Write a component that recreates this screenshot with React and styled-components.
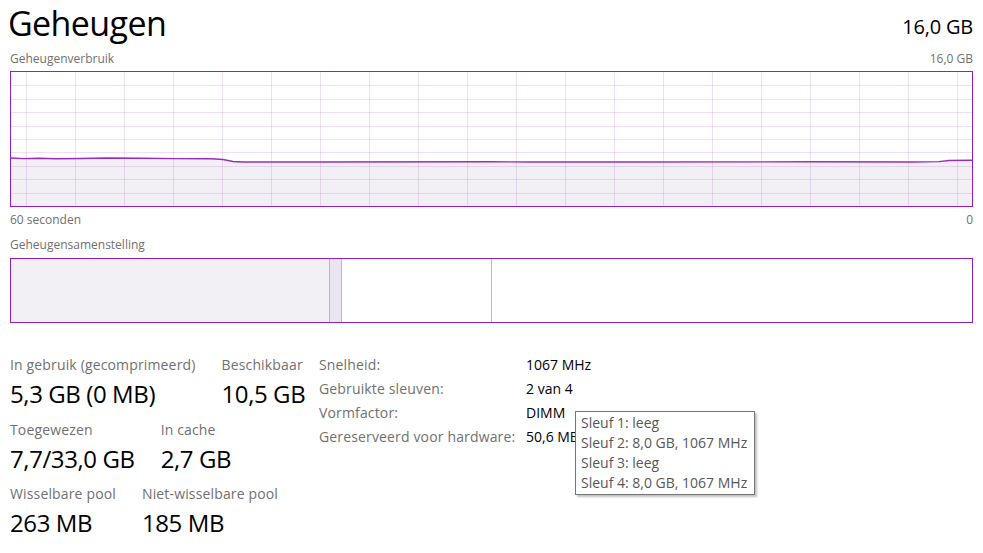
import React from "react";
import styled, { createGlobalStyle } from "styled-components";

const GlobalStyle = createGlobalStyle`
  html, body {
    margin: 0;
    padding: 0;
    background: #ffffff;
  }
  body {
    font-family: "Open Sans", "Noto Sans", sans-serif;
    color: #000;
  }
`;

const Page = styled.div`
  position: relative;
  width: 983px;
  height: 553px;
  padding: 0 10px;
  box-sizing: border-box;
  overflow: hidden;
`;

const HeaderRow = styled.div`
  display: flex;
  justify-content: space-between;
  align-items: flex-end;
`;

const Title = styled.h1`
  margin: 0 0 0 -2px;
  padding-right: 4px;
  font-size: 34px;
  line-height: 46px;
  font-weight: 400;
  letter-spacing: -0.6px;
`;

const TotalSize = styled.div`
  font-size: 20px;
  line-height: 28px;
  margin-bottom: 5px;
  letter-spacing: -0.2px;
`;

const CaptionRow = styled.div`
  display: flex;
  justify-content: space-between;
  font-size: 12px;
  line-height: 16px;
  color: #707070;
  margin-top: ${(p) => p.$top || 0}px;
`;

const ChartBox = styled.div`
  margin-top: 4px;
  height: 136px;
  border: 1px solid #951fb8;
  box-sizing: border-box;
  svg {
    display: block;
  }
`;

const CompositionBar = styled.div`
  margin-top: 5px;
  height: 65px;
  border: 1px solid #951fb8;
  box-sizing: border-box;
  display: flex;
`;

const Segment = styled.div`
  width: ${(p) => (p.$width ? `${p.$width}px` : "auto")};
  flex: ${(p) => (p.$width ? "none" : "1")};
  background: ${(p) => p.$fill || "#fff"};
  border-right: ${(p) => (p.$divider ? "1px solid #cba9da" : "none")};
`;

const Stats = styled.div`
  display: flex;
  align-items: flex-start;
  margin-top: 29px;
`;

const MainStats = styled.div`
  width: 309px;
  padding-top: 3px;
  display: flex;
  flex-direction: column;
  gap: 8.5px;
`;

const StatRow = styled.div`
  display: flex;
  gap: 26px;
`;

const Stat = styled.div`
  display: flex;
  flex-direction: column;
  gap: 3px;
`;

const StatLabel = styled.div`
  font-size: 14px;
  line-height: 19px;
  color: #707070;
  letter-spacing: 0.15px;
  white-space: nowrap;
`;

const StatValue = styled.div`
  font-size: 24px;
  line-height: 34px;
  letter-spacing: -0.4px;
  white-space: nowrap;
`;

const Details = styled.div`
  margin-top: 1px;
  display: grid;
  grid-template-columns: 207px auto;
  grid-auto-rows: 24px;
  font-size: 14px;
  line-height: 24px;
`;

const DetailLabel = styled.div`
  color: #707070;
  letter-spacing: 0.15px;
  white-space: nowrap;
`;

const DetailValue = styled.div`
  color: #000;
  white-space: nowrap;
`;

const Tooltip = styled.div`
  position: absolute;
  left: 575px;
  top: 411px;
  width: 180px;
  height: 84px;
  box-sizing: border-box;
  padding: 1px 0 0 5px;
  background: #fff;
  border: 1px solid #767676;
  box-shadow: 2px 2px 2px rgba(0, 0, 0, 0.25);
  font-size: 14px;
  line-height: 20px;
  color: #575757;
  white-space: nowrap;
`;

const CHART_W = 961;
const CHART_H = 134;

const usage = [
  [0, 86], [12, 86.6], [28, 86.2], [45, 86.8], [70, 86.5], [95, 86], [130, 86.3],
  [165, 86.6], [200, 86.8], [212, 87.5], [222, 89.5], [232, 90], [300, 90],
  [480, 89.7], [520, 90], [620, 90], [800, 89.8], [900, 90], [928, 89.6],
  [938, 88.5], [961, 88.3],
];

const UsageChart = () => {
  const verticals = [];
  for (let x = 15; x < CHART_W; x += 49) verticals.push(x);
  const horizontals = [];
  for (let k = 1; k < 10; k++) horizontals.push(Math.round((k * CHART_H) / 10) + 0.5);
  const line = usage.map(([x, y]) => `${x},${y}`).join(" ");
  const area = `0,${CHART_H} ${line} ${CHART_W},${CHART_H}`;

  return (
    <svg width={CHART_W} height={CHART_H} viewBox={`0 0 ${CHART_W} ${CHART_H}`}>
      <polygon points={area} fill="#f2f0f4" />
      {verticals.map((x) => (
        <line key={`v${x}`} x1={x + 0.5} y1={0} x2={x + 0.5} y2={CHART_H} stroke="rgba(160, 60, 190, 0.16)" strokeWidth="1" />
      ))}
      {horizontals.map((y) => (
        <line key={`h${y}`} x1={0} y1={y} x2={CHART_W} y2={y} stroke="rgba(160, 60, 190, 0.16)" strokeWidth="1" />
      ))}
      <polyline points={line} fill="none" stroke="#9a2cbd" strokeWidth="1.4" />
    </svg>
  );
};

const mainStats = [
  [
    ["In gebruik (gecomprimeerd)", "5,3 GB (0 MB)"],
    ["Beschikbaar", "10,5 GB"],
  ],
  [
    ["Toegewezen", "7,7/33,0 GB"],
    ["In cache", "2,7 GB"],
  ],
  [
    ["Wisselbare pool", "263 MB"],
    ["Niet-wisselbare pool", "185 MB"],
  ],
];

const details = [
  ["Snelheid:", "1067 MHz"],
  ["Gebruikte sleuven:", "2 van 4"],
  ["Vormfactor:", "DIMM"],
  ["Gereserveerd voor hardware:", "50,6 MB"],
];

const slots = ["Sleuf 1: leeg", "Sleuf 2: 8,0 GB, 1067 MHz", "Sleuf 3: leeg", "Sleuf 4: 8,0 GB, 1067 MHz"];

const App = () => {
  return (
    <>
      <GlobalStyle />
      <Page>
        <HeaderRow>
          <Title>Geheugen</Title>
          <TotalSize>16,0 GB</TotalSize>
        </HeaderRow>

        <CaptionRow $top={5}>
          <span>Geheugenverbruik</span>
          <span>16,0 GB</span>
        </CaptionRow>
        <ChartBox>
          <UsageChart />
        </ChartBox>
        <CaptionRow $top={5}>
          <span>60 seconden</span>
          <span>0</span>
        </CaptionRow>

        <CaptionRow $top={9}>
          <span>Geheugensamenstelling</span>
        </CaptionRow>
        <CompositionBar>
          <Segment $width={318} $fill="#f2f0f4" $divider />
          <Segment $width={11} $fill="#ede4f2" $divider />
          <Segment $width={149} $divider />
          <Segment />
        </CompositionBar>

        <Stats>
          <MainStats>
            {mainStats.map((row, i) => (
              <StatRow key={i}>
                {row.map(([label, value]) => (
                  <Stat key={label}>
                    <StatLabel>{label}</StatLabel>
                    <StatValue>{value}</StatValue>
                  </Stat>
                ))}
              </StatRow>
            ))}
          </MainStats>
          <Details>
            {details.map(([label, value]) => (
              <React.Fragment key={label}>
                <DetailLabel>{label}</DetailLabel>
                <DetailValue>{value}</DetailValue>
              </React.Fragment>
            ))}
          </Details>
        </Stats>

        <Tooltip>
          {slots.map((s) => (
            <div key={s}>{s}</div>
          ))}
        </Tooltip>
      </Page>
    </>
  );
};

export default App;
